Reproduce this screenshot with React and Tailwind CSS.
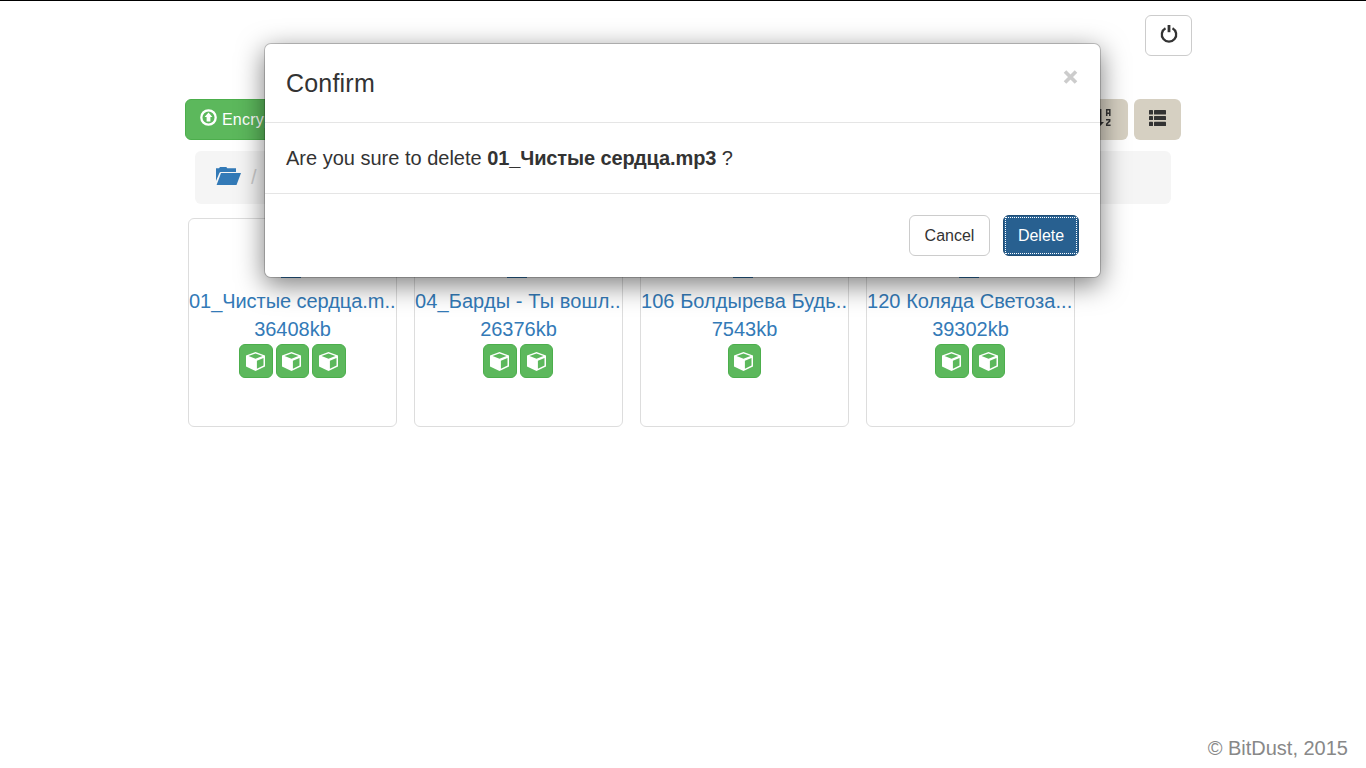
import React from "react";

const files = [
  { name: "01_Чистые сердца.m..", size: "36408kb", copies: 3, fit: "tracking-[-0.05px]" },
  { name: "04_Барды - Ты вошл..", size: "26376kb", copies: 2, fit: "tracking-[0.1px]" },
  { name: "106 Болдырева Будь..", size: "7543kb", copies: 1, fit: "tracking-[0.05px]" },
  { name: "120 Коляда Светоза...", size: "39302kb", copies: 2, fit: "tracking-[0.05px]" },
];

function UploadIcon() {
  return (
    <svg className="block h-[17px] w-[17px]" viewBox="0 0 17 17">
      <circle cx="8.5" cy="8.5" r="7.2" fill="none" stroke="#fff" strokeWidth="2.3" />
      <path d="M8.5 3.6 12.4 8H10.4v4.6H6.6V8H4.6z" fill="#fff" />
    </svg>
  );
}

function PowerIcon() {
  return (
    <svg className="block h-[18px] w-[18px]" viewBox="0 0 18 18">
      <path d="M5.5 3.2a7.2 7.2 0 1 0 7 0" fill="none" stroke="#333" strokeWidth="2.3" />
      <path d="M7.6 0h2.8v7.2H7.6z" fill="#333" />
    </svg>
  );
}

function SortIcon() {
  return (
    <svg className="block h-[17px] w-[17px]" viewBox="0 0 17 17">
      <path d="M4 0h2.4v13H9l-3.8 4L1.4 13H4z" fill="#333" />
      <path
        d="M11.7 7V.8h3.1V7M11.7 4.3h3.1M11 10.7h3.7v1.4l-3 2.9v1.2h3.9"
        fill="none"
        stroke="#333"
        strokeWidth="1.5"
      />
    </svg>
  );
}

function ListIcon() {
  return (
    <svg className="block h-4 w-[17px]" viewBox="0 0 17 16" fill="#333">
      <rect width="4" height="4.5" rx=".6" />
      <rect x="5" width="12" height="4.5" rx=".6" />
      <rect y="6" width="4" height="4" rx=".6" />
      <rect x="5" y="6" width="12" height="4" rx=".6" />
      <rect y="11.7" width="4" height="4.3" rx=".6" />
      <rect x="5" y="11.7" width="12" height="4.3" rx=".6" />
    </svg>
  );
}

function FolderIcon() {
  return (
    <svg className="block h-[18px] w-[25px]" viewBox="0 0 25 18" fill="#337ab7">
      <path d="M0 14V1.2h3L4 0h6.3l1 1.2H20V5H4.5L3.5 5.8z" />
      <path d="M5 6h20l-4.5 12H.6z" />
    </svg>
  );
}

function CubeIcon() {
  return (
    <svg className="mr-[1px] block h-[19px] w-[19px]" viewBox="0 0 19 19">
      <path d="M9.5 0 19 3.4V14.4L9.5 19 0 14.4V3.4z" fill="#fff" />
      <path d="M9.5 1.4 16.5 4 9.5 6.8 2.5 4zM10.9 8.7 17.5 6.1V13.5L10.9 16.8z" fill="#5cb85c" />
    </svg>
  );
}

function FileCard({ name, size, copies, fit }) {
  return (
    <div className="flex h-[209px] w-[209px] flex-col items-center rounded-[6px] border border-[#ddd] bg-white text-[20px] leading-7 text-[#337ab7]">
      <div className="flex h-[68px] w-full shrink-0 items-end justify-center pb-[9px]">
        <div className="mr-[3px] h-[35px] w-5 bg-[#337ab7]" />
      </div>
      <div className={`w-full overflow-hidden whitespace-nowrap ${fit}`}>{name}</div>
      <div>{size}</div>
      <div className="mt-px mr-[0.5px] flex gap-[3px]">
        {Array.from({ length: copies }, (_, i) => (
          <div
            key={i}
            className="flex h-[34px] w-[33.5px] items-center justify-center rounded-[6px] border border-[#4cae4c] bg-[#5cb85c]"
          >
            <CubeIcon />
          </div>
        ))}
      </div>
    </div>
  );
}

function ConfirmDialog() {
  return (
    <div className="absolute inset-0 flex items-start pt-[42px] pl-[264px]">
      <div className="w-[837px] rounded-[7px] border border-black/20 bg-white bg-clip-padding text-[#333] shadow-[0_7px_27px_rgba(0,0,0,0.5)]">
        <div className="flex h-[79px] items-start justify-between border-b border-[#e5e5e5] pt-[21px] pr-[22px] pl-[21px]">
          <h4 className="text-[25px] leading-[36px] tracking-[0.2px]">Confirm</h4>
          <svg className="mt-[5px] block h-[14px] w-[15px]" viewBox="0 0 15 14">
            <path d="m2 1.5 11 11m0-11-11 11" stroke="#ccc" strokeWidth="3.6" />
          </svg>
        </div>
        <div className="flex h-[70px] items-center px-[21px] text-[20px] leading-7 whitespace-pre">
          Are you sure to delete <b className="tracking-[-0.12px]">01_Чистые сердца.mp3</b> ?
        </div>
        <div className="flex h-[84px] items-start justify-end gap-[13px] border-t border-[#e5e5e5] pt-[21px] pr-[21px] text-[16px]">
          <button className="h-[41px] w-[81px] rounded-[6px] border border-[#ccc] bg-white">Cancel</button>
          <button className="h-[41px] w-[76px] rounded-[6px] border border-[#204d74] bg-[#286090] p-px text-white">
            <span className="flex h-full w-full items-center justify-center border border-dotted border-white">Delete</span>
          </button>
        </div>
      </div>
    </div>
  );
}

export default function App() {
  return (
    <div className="relative flex h-[768px] w-[1366px] flex-col overflow-hidden border-t border-black bg-white font-['Liberation_Sans',Arial,sans-serif]">
      <header className="flex h-[98px] justify-end pt-[14px] pr-[174px]">
        <button className="flex h-[41px] w-[47px] justify-center rounded-[6px] border border-[#ccc] bg-white pt-[9px]">
          <PowerIcon />
        </button>
      </header>
      <div className="flex h-[41px] justify-between pr-[185px] pl-[185px]">
        <button className="flex h-[41px] w-[160px] gap-[5px] rounded-[6px] border border-[#4cae4c] bg-[#5cb85c] pl-[14px] text-[16px] text-white">
          <span className="mt-[9px]">
            <UploadIcon />
          </span>
          <span className="leading-[39px] tracking-[0.2px]">Encrypt</span>
        </button>
        <div className="flex gap-[6px]">
          <div className="flex h-[41px] w-[47px] justify-center rounded-[6px] bg-[#d6d0c2] pt-[10px] pr-[3px]">
            <SortIcon />
          </div>
          <div className="flex h-[41px] w-[47px] justify-center rounded-[6px] bg-[#d6d0c2] pt-[11px]">
            <ListIcon />
          </div>
        </div>
      </div>
      <nav className="mt-[11px] ml-[195px] flex h-[53px] w-[976px] items-start rounded-[6px] bg-[#f5f5f5] pl-[21px]">
        <span className="mt-4">
          <FolderIcon />
        </span>
        <span className="ml-[10px] text-[20px] leading-[52px] text-[#ccc]">/</span>
      </nav>
      <main className="mt-[14px] ml-[188px] flex gap-[17px]">
        {files.map((f) => (
          <FileCard key={f.name} {...f} />
        ))}
      </main>
      <footer className="mt-auto pr-[18px] pb-[6px] text-right text-[20px] leading-7 text-[#888]">© BitDust, 2015</footer>
      <ConfirmDialog />
    </div>
  );
}
